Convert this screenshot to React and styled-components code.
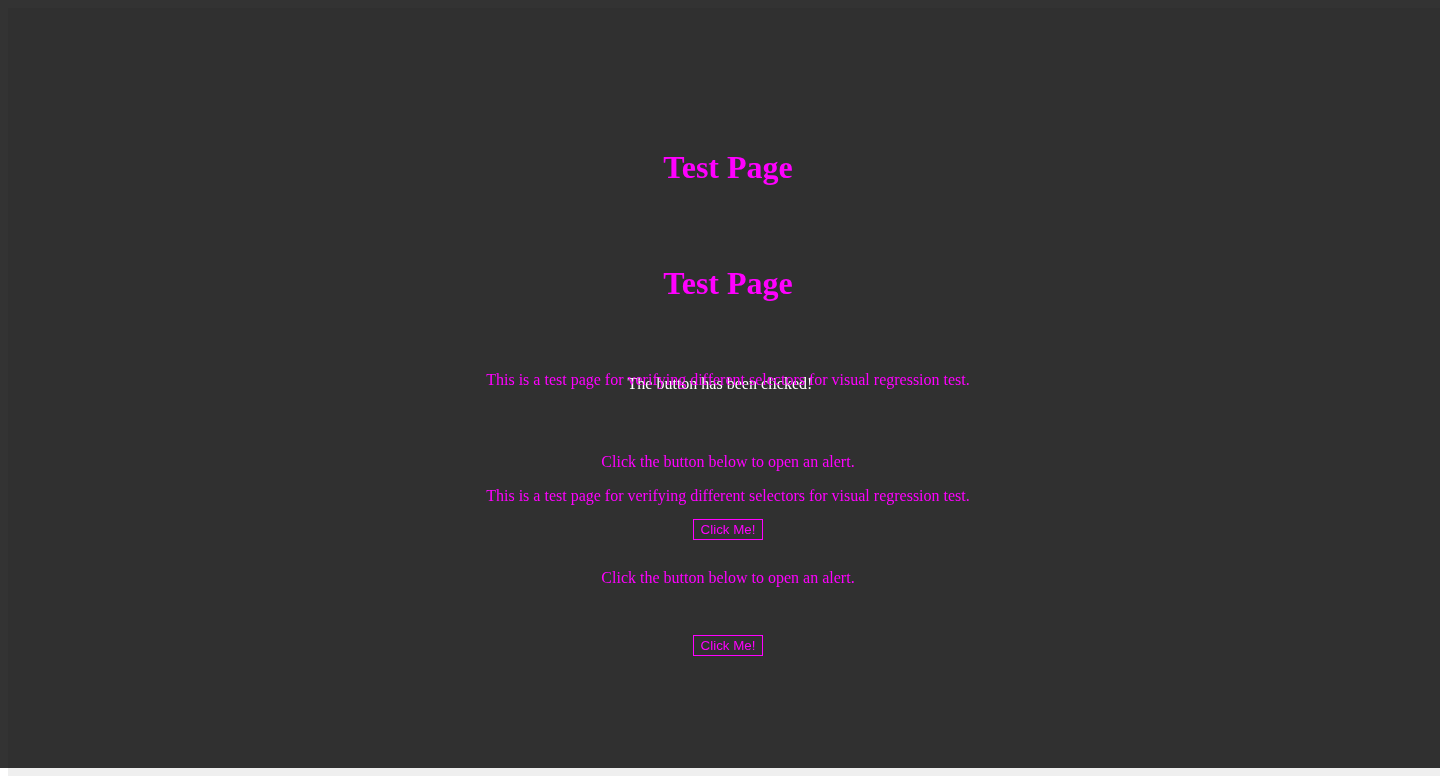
import React from "react";
import styled, { createGlobalStyle } from "styled-components";

const Global = createGlobalStyle`
  html, body { background: #ffffff; }
  body {
    margin: 8px;
    font-family: "Liberation Serif", "Times New Roman", serif;
  }
  * { box-sizing: border-box; }
`;

const Frame = styled.div`
  position: relative;
  width: 1440px;
  height: 768px;
  background: #efefef;
`;

const Overlay = styled.div`
  position: fixed;
  top: 0;
  left: 0;
  width: 1440px;
  height: 768px;
  background: rgba(0, 0, 0, 0.8);
  display: flex;
  align-items: center;
  justify-content: center;
  z-index: 1;
`;

const Message = styled.p`
  margin: 0;
  color: #ffffff;
  font-size: 16px;
  line-height: 18px;
  font-family: "Liberation Serif", "Times New Roman", serif;
`;

const Stack = styled.div`
  position: relative;
  z-index: 2;
  display: grid;
  width: 100%;
  height: 100%;
`;

const Block = styled.section`
  grid-area: 1 / 1;
  display: flex;
  flex-direction: column;
  align-items: center;
  padding-top: ${(p) => p.$top}px;
`;

const Title = styled.h1`
  margin: 0;
  color: #ff00ff;
  font-size: 32px;
  line-height: 36px;
  font-weight: bold;
`;

const Text = styled.p`
  margin: ${(p) => p.$gap}px 0 0;
  color: #ff00ff;
  font-size: 16px;
  line-height: 18px;
`;

const Button = styled.button`
  margin-top: 48px;
  height: 21px;
  padding: 1px 7px;
  background: transparent;
  border: 1px solid #ff00ff;
  color: #ff00ff;
  font-family: "Liberation Sans", Arial, sans-serif;
  font-size: 13.333px;
  line-height: 16px;
  cursor: pointer;
`;

function Content({ top }) {
  return (
    <Block $top={top}>
      <Title>Test Page</Title>
      <Text $gap={186}>
        This is a test page for verifying different selectors for visual regression test.
      </Text>
      <Text $gap={64}>Click the button below to open an alert.</Text>
      <Button>Click Me!</Button>
    </Block>
  );
}

export default function App() {
  return (
    <>
      <Global />
      <Frame>
        <Overlay>
          <Message>The button has been clicked!</Message>
        </Overlay>
        <Stack>
          <Content top={141} />
          <Content top={257} />
        </Stack>
      </Frame>
    </>
  );
}
